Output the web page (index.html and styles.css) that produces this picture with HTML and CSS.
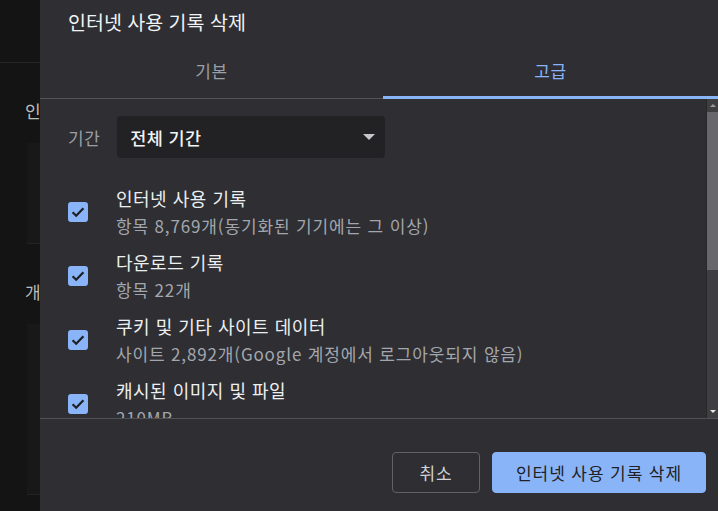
FILE: index.html
```html
<!DOCTYPE html>
<html lang="ko">
<head>
    <meta charset="UTF-8">
    <meta name="viewport" content="width=device-width, initial-scale=1.0">
    <title>인터넷 사용 기록 삭제</title>
    <link rel="stylesheet" href="styles.css">
</head>
<body>
    <div class="page">
        <div class="page-top"></div>
        <div class="page-section">
            <p class="page-heading">인터넷</p>
            <div class="page-card"></div>
        </div>
        <div class="page-section">
            <p class="page-heading">개인정보</p>
            <div class="page-card tall"></div>
        </div>
    </div>

    <div class="dialog">
        <div class="dialog-title">인터넷 사용 기록 삭제</div>
        <div class="tabs">
            <div class="tab">기본</div>
            <div class="tab active">고급</div>
        </div>

        <div class="dialog-body">
            <div class="body-content">
                <div class="range-row">
                    <span class="range-label">기간</span>
                    <div class="select">
                        <span>전체 기간</span>
                        <span class="select-arrow"></span>
                    </div>
                </div>

                <div class="item">
                    <span class="checkbox"><svg width="20" height="20" viewBox="0 0 20 20"><path d="M4.6 10.2l3.6 3.5 7.2-7.4" fill="none" stroke="#202124" stroke-width="2.3"/></svg></span>
                    <div class="item-text">
                        <div class="item-title">인터넷 사용 기록</div>
                        <div class="item-sub">항목 8,769개(동기화된 기기에는 그 이상)</div>
                    </div>
                </div>
                <div class="item">
                    <span class="checkbox"><svg width="20" height="20" viewBox="0 0 20 20"><path d="M4.6 10.2l3.6 3.5 7.2-7.4" fill="none" stroke="#202124" stroke-width="2.3"/></svg></span>
                    <div class="item-text">
                        <div class="item-title">다운로드 기록</div>
                        <div class="item-sub">항목 22개</div>
                    </div>
                </div>
                <div class="item">
                    <span class="checkbox"><svg width="20" height="20" viewBox="0 0 20 20"><path d="M4.6 10.2l3.6 3.5 7.2-7.4" fill="none" stroke="#202124" stroke-width="2.3"/></svg></span>
                    <div class="item-text">
                        <div class="item-title">쿠키 및 기타 사이트 데이터</div>
                        <div class="item-sub">사이트 2,892개(Google 계정에서 로그아웃되지 않음)</div>
                    </div>
                </div>
                <div class="item">
                    <span class="checkbox"><svg width="20" height="20" viewBox="0 0 20 20"><path d="M4.6 10.2l3.6 3.5 7.2-7.4" fill="none" stroke="#202124" stroke-width="2.3"/></svg></span>
                    <div class="item-text">
                        <div class="item-title">캐시된 이미지 및 파일</div>
                        <div class="item-sub">210MB</div>
                    </div>
                </div>
            </div>

            <div class="scrollbar">
                <span class="scroll-up"></span>
                <div class="scroll-thumb"></div>
                <span class="scroll-down"></span>
            </div>
        </div>

        <div class="dialog-footer">
            <button class="button">취소</button>
            <button class="button primary">인터넷 사용 기록 삭제</button>
        </div>
    </div>
</body>
</html>
```

FILE: styles.css
```css
body {
    margin: 0;
    width: 718px;
    height: 511px;
    overflow: hidden;
    background-color: #141414;
    font-family: "Noto Sans CJK KR", "Noto Sans", sans-serif;
    color: #e8eaed;
}
.page {
    width: 40px;
    overflow: hidden;
}
.page-top {
    height: 62px;
    border-bottom: 1px solid #262626;
}
.page-section {
    padding-top: 36px;
    padding-left: 25px;
}
.page-heading {
    margin: 0;
    font-size: 17px;
    line-height: 24px;
    color: #bdbdbd;
    white-space: nowrap;
    overflow: hidden;
}
.page-card {
    margin: 20px 0 0 2px;
    height: 100px;
    background: #181818;
    border-bottom: 1px solid #222;
}
.page-card.tall {
    height: 170px;
}
.dialog {
    position: absolute;
    left: 40px;
    top: 0;
    width: 678px;
    height: 511px;
    background: #2e2e33;
    display: flex;
    flex-direction: column;
}
.dialog-title {
    height: 45px;
    padding-left: 28px;
    font-size: 19.5px;
    line-height: 44px;
    color: #f1f3f4;
}
.tabs {
    display: grid;
    grid-template-columns: 343px 1fr;
    height: 53px;
    border-bottom: 1px solid #525357;
}
.tab {
    position: relative;
    text-align: center;
    font-size: 17px;
    line-height: 51px;
    letter-spacing: 0.5px;
    color: #9aa0a6;
}
.tab.active {
    color: #8ab4f8;
}
.tab.active::after {
    content: "";
    position: absolute;
    left: 0;
    right: 0;
    bottom: -1px;
    height: 3px;
    background: #8ab4f8;
}
.dialog-body {
    height: 319px;
    display: flex;
    overflow: hidden;
}
.body-content {
    flex: 1;
    padding: 17px 0 0 28px;
}
.range-row {
    display: flex;
    align-items: center;
    gap: 17px;
    margin-bottom: 22px;
}
.range-label {
    font-size: 17px;
    letter-spacing: 0.5px;
    color: #9aa0a6;
}
.select {
    width: 268px;
    height: 42px;
    box-sizing: border-box;
    padding: 0 10px 0 13px;
    background: #222225;
    border-radius: 4px;
    display: flex;
    align-items: center;
    justify-content: space-between;
    font-size: 17.5px;
    font-weight: 500;
    letter-spacing: 0.4px;
    color: #f1f3f4;
}
.select-arrow {
    width: 0;
    height: 0;
    border-left: 6px solid transparent;
    border-right: 6px solid transparent;
    border-top: 6px solid #c4c7cc;
}
.item {
    height: 64px;
    display: flex;
    align-items: center;
    gap: 28px;
}
.checkbox {
    width: 20px;
    height: 20px;
    border-radius: 3px;
    background: #8ab4f8;
    display: flex;
}
.item-title {
    font-size: 18px;
    line-height: 28px;
    letter-spacing: 0.5px;
    color: #eceef0;
}
.item-sub {
    font-size: 17px;
    line-height: 28px;
    letter-spacing: 0.85px;
    color: #a3a7ad;
}
.scrollbar {
    width: 11px;
    background: #3f3f42;
    border-left: 1px solid #28282b;
    display: flex;
    flex-direction: column;
    align-items: center;
}
.scroll-up, .scroll-down {
    width: 0;
    height: 0;
    margin: 5px 0;
    border-left: 3px solid transparent;
    border-right: 3px solid transparent;
}
.scroll-up {
    border-bottom: 3px solid #9a9a9a;
}
.scroll-down {
    margin-top: auto;
    border-top: 3px solid #e8e8e8;
}
.scroll-thumb {
    width: 100%;
    height: 158px;
    background: #68686b;
}
.dialog-footer {
    flex: 1;
    border-top: 1px solid #505155;
    display: flex;
    justify-content: flex-end;
    align-items: flex-start;
    gap: 12px;
    padding: 33px 12px 0 0;
}
.button {
    height: 41px;
    padding: 0;
    font-family: inherit;
    font-size: 17px;
    letter-spacing: 0.9px;
    border-radius: 4px;
    border: 1px solid #5f6368;
    background: transparent;
    color: #d2d5d9;
}
.button:first-child {
    width: 88px;
}
.button.primary {
    width: 214px;
    border-color: #8ab4f8;
    background: #8ab4f8;
    color: #202124;
}
```
